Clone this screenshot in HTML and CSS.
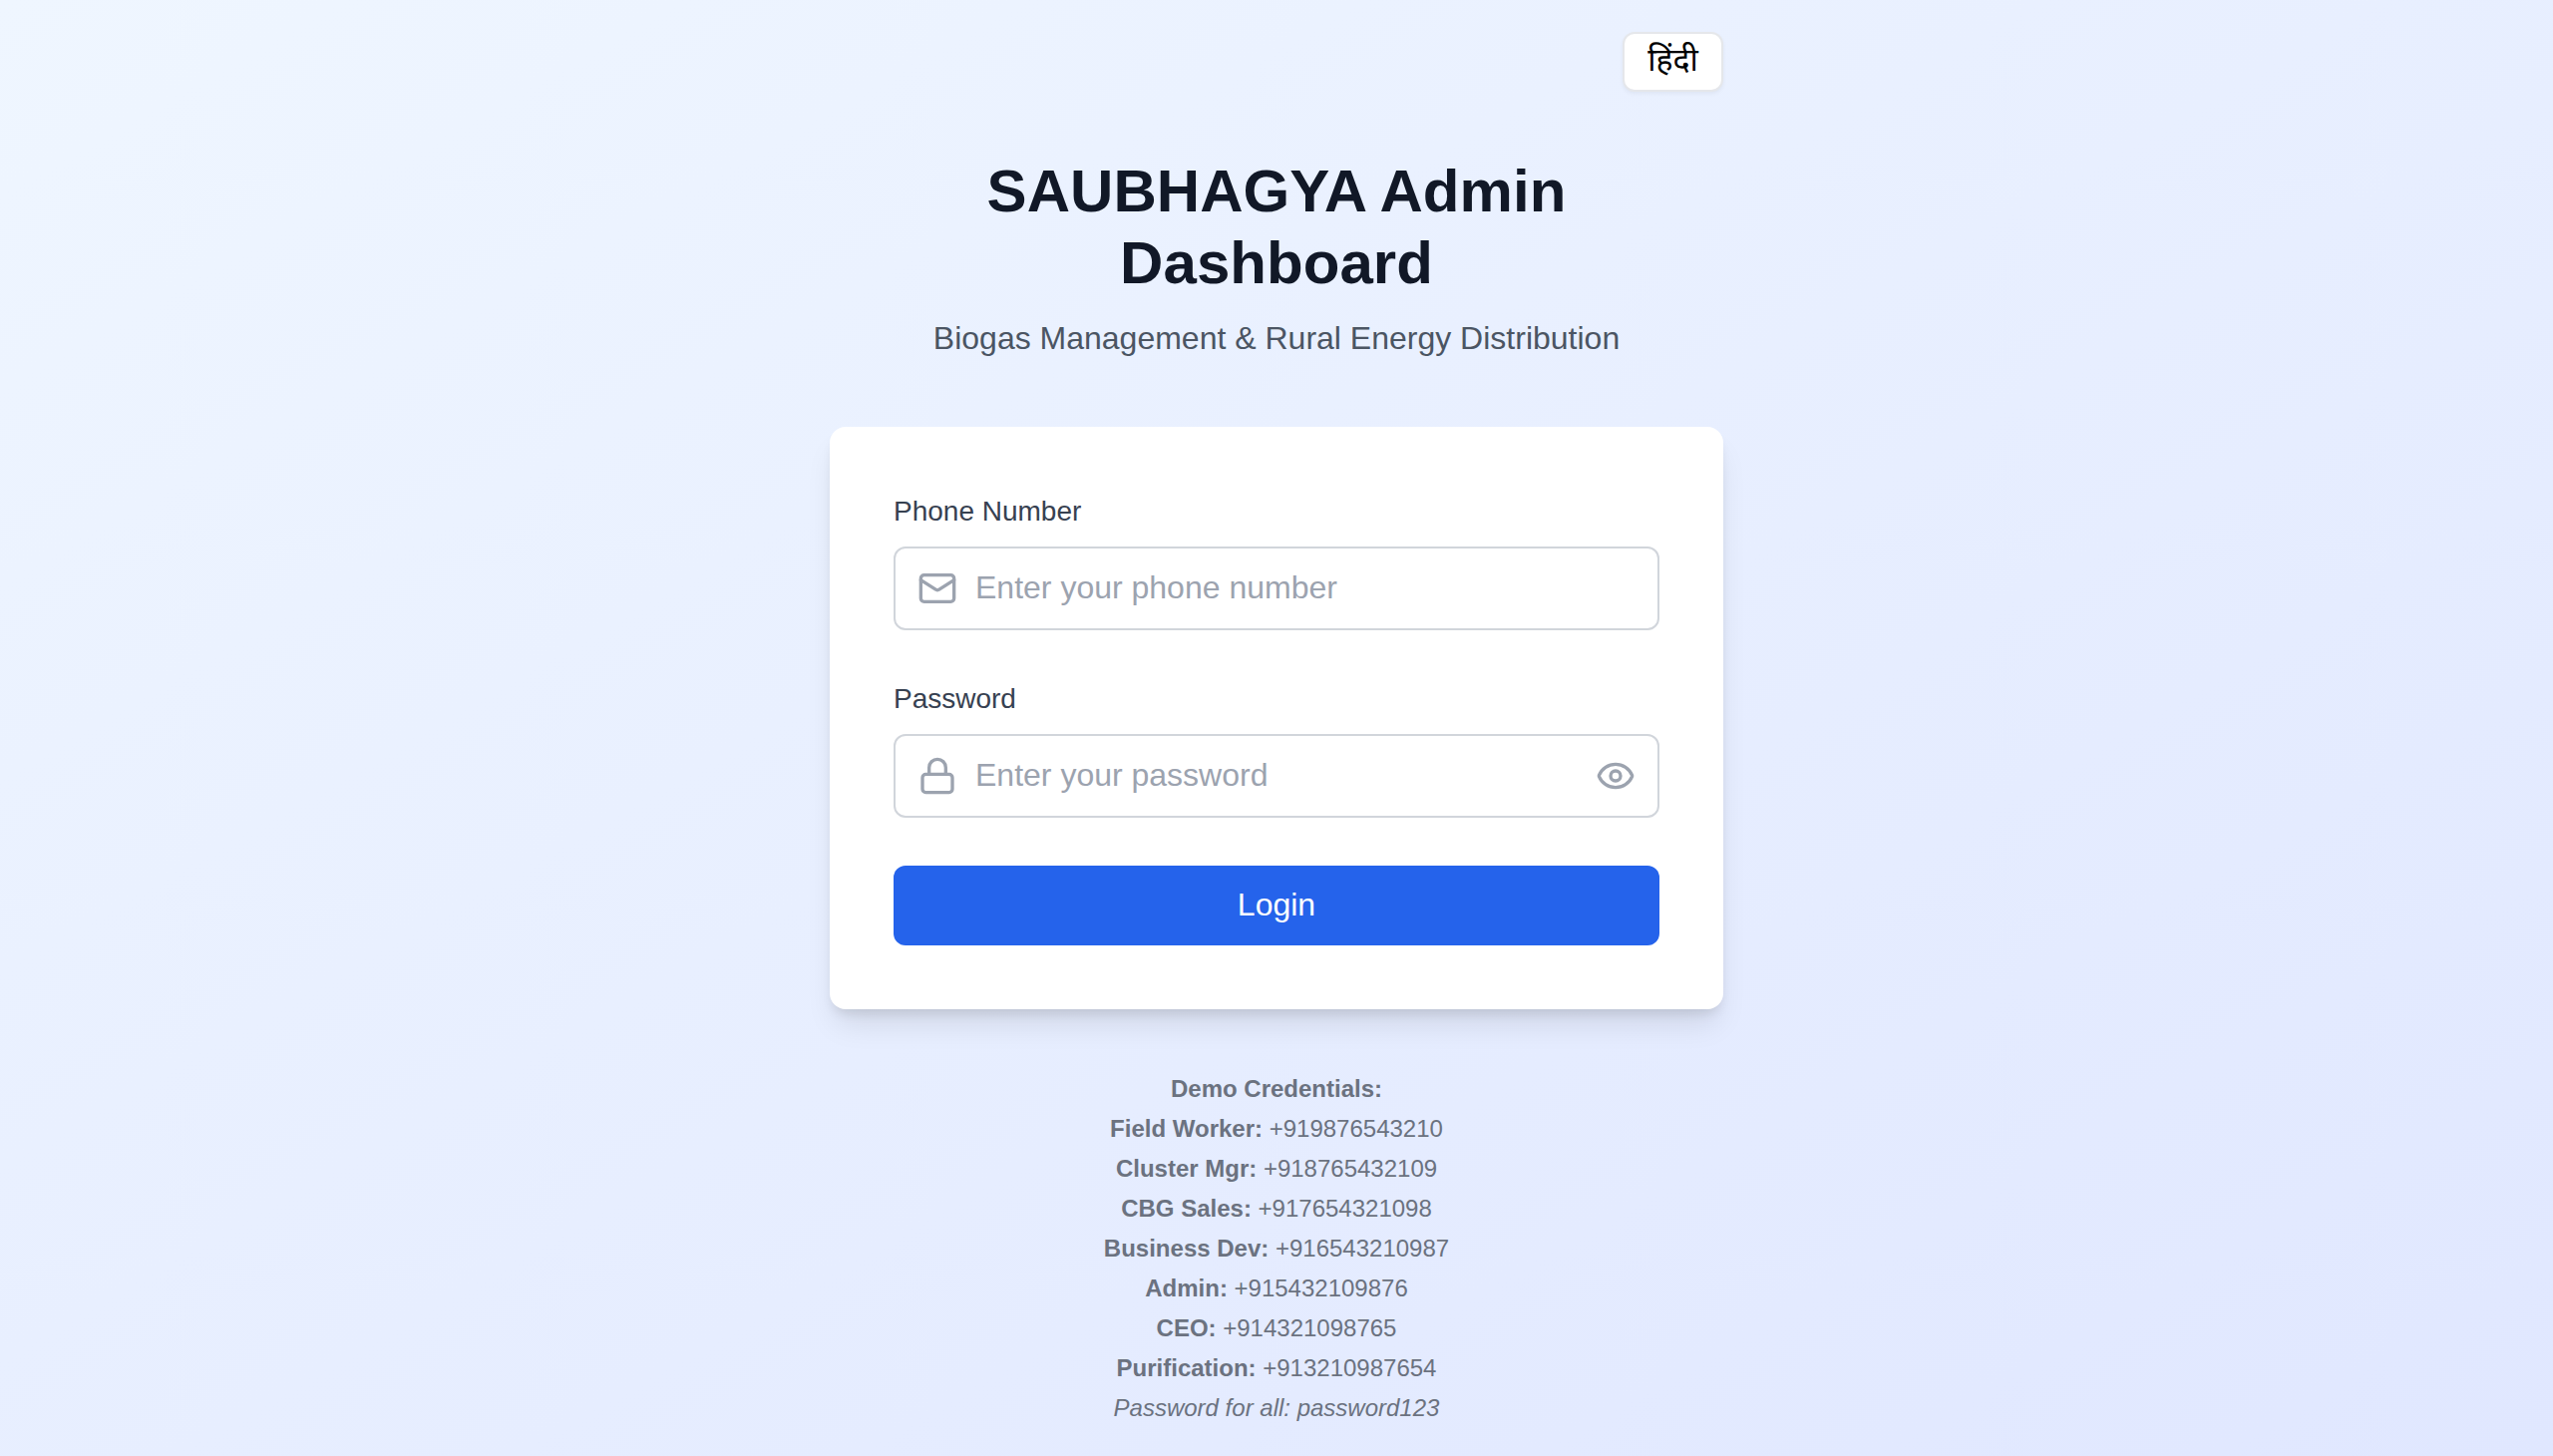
FILE: index.html
```html
<!DOCTYPE html>
<html lang="en">
<head>
<meta charset="utf-8">
<title>SAUBHAGYA Admin Dashboard</title>
<link rel="stylesheet" href="styles.css">
</head>
<body>
<main class="page">
  <div class="column">
    <div class="topbar"><button class="lang" type="button" lang="hi">हिंदी</button></div>
    <header class="intro">
      <h1 class="title">SAUBHAGYA Admin Dashboard</h1>
      <p class="subtitle">Biogas Management &amp; Rural Energy Distribution</p>
    </header>
    <form class="card">
      <div class="group">
        <label class="label" for="phone">Phone Number</label>
        <div class="field">
          <svg class="icon" viewBox="0 0 24 24"><rect width="20" height="16" x="2" y="4" rx="2"/><path d="m22 7-8.97 5.7a1.94 1.94 0 0 1-2.06 0L2 7"/></svg>
          <input class="input" id="phone" type="tel" placeholder="Enter your phone number">
        </div>
      </div>
      <div class="group">
        <label class="label" for="password">Password</label>
        <div class="field">
          <svg class="icon" viewBox="0 0 24 24"><rect width="18" height="11" x="3" y="11" rx="2"/><path d="M7 11V7a5 5 0 0 1 10 0v4"/></svg>
          <input class="input" id="password" type="password" placeholder="Enter your password">
          <svg class="icon" viewBox="0 0 24 24"><path d="M2.062 12.348a1 1 0 0 1 0-.696 10.75 10.75 0 0 1 19.876 0 1 1 0 0 1 0 .696 10.75 10.75 0 0 1-19.876 0"/><circle cx="12" cy="12" r="3"/></svg>
        </div>
      </div>
      <button class="submit" type="button">Login</button>
    </form>
    <section class="demo">
      <p><strong>Demo Credentials:</strong></p>
      <p><strong>Field Worker:</strong> +919876543210</p>
      <p><strong>Cluster Mgr:</strong> +918765432109</p>
      <p><strong>CBG Sales:</strong> +917654321098</p>
      <p><strong>Business Dev:</strong> +916543210987</p>
      <p><strong>Admin:</strong> +915432109876</p>
      <p><strong>CEO:</strong> +914321098765</p>
      <p><strong>Purification:</strong> +913210987654</p>
      <p><em>Password for all: password123</em></p>
    </section>
  </div>
</main>
</body>
</html>
```
FILE: styles.css
```css
* { box-sizing: border-box; margin: 0; }

body {
  font-family: "Liberation Sans", Arial, sans-serif;
  font-size: 32px;
  line-height: 48px;
}

.page {
  display: flex;
  align-items: center;
  justify-content: center;
  min-height: 100vh;
  padding: 32px;
  background: linear-gradient(to bottom right, #eff6ff, #e0e7ff);
}

.column {
  display: flex;
  flex-direction: column;
  gap: 64px;
  width: 896px;
}

.topbar { display: flex; justify-content: flex-end; }

.lang {
  width: 101px;
  height: 60px;
  padding: 9px 0 7px;
  border: 2px solid #e5e7eb;
  border-radius: 12px;
  background: #fff;
  box-shadow: 0 2px 4px rgb(0 0 0 / 0.05);
  color: #000;
  font: 32px/40px "Noto Sans Devanagari", "Noto Sans", "Liberation Sans", sans-serif;
}

.intro {
  display: flex;
  flex-direction: column;
  gap: 16px;
  text-align: center;
}

.title {
  color: #111827;
  font-size: 60px;
  font-weight: 700;
  letter-spacing: 0.05px;
  line-height: 72px;
}

.subtitle {
  padding-bottom: 2px;
  color: #4b5563;
  line-height: 46px;
}

.card {
  display: flex;
  flex-direction: column;
  gap: 48px;
  padding: 64px;
  border-radius: 16px;
  background: #fff;
  box-shadow: 0 20px 30px -6px rgb(0 0 0 / 0.1), 0 8px 12px -4px rgb(0 0 0 / 0.1);
}

.group {
  display: flex;
  flex-direction: column;
  gap: 16px;
}

.label {
  padding-top: 2px;
  color: #374151;
  font-size: 28px;
  line-height: 38px;
}

.field {
  display: flex;
  align-items: center;
  gap: 18px;
  height: 84px;
  padding: 0 22px;
  border: 2px solid #d1d5db;
  border-radius: 12px;
}

.icon {
  flex: none;
  width: 40px;
  height: 40px;
  fill: none;
  stroke: #9ca3af;
  stroke-width: 2;
  stroke-linecap: round;
  stroke-linejoin: round;
}

.input {
  flex: 1;
  min-width: 0;
  height: 48px;
  padding: 0 0 2px;
  border: 0;
  outline: 0;
  background: transparent;
  color: #111827;
  font: inherit;
}

.input::placeholder { color: #9ca3af; }

.submit {
  height: 80px;
  padding: 0 0 2px;
  border: 0;
  border-radius: 12px;
  background: #2563eb;
  color: #fff;
  font: inherit;
}

.demo {
  display: flex;
  flex-direction: column;
  gap: 8px;
  color: #6b7280;
  font-size: 24px;
  line-height: 32px;
  text-align: center;
}
```
